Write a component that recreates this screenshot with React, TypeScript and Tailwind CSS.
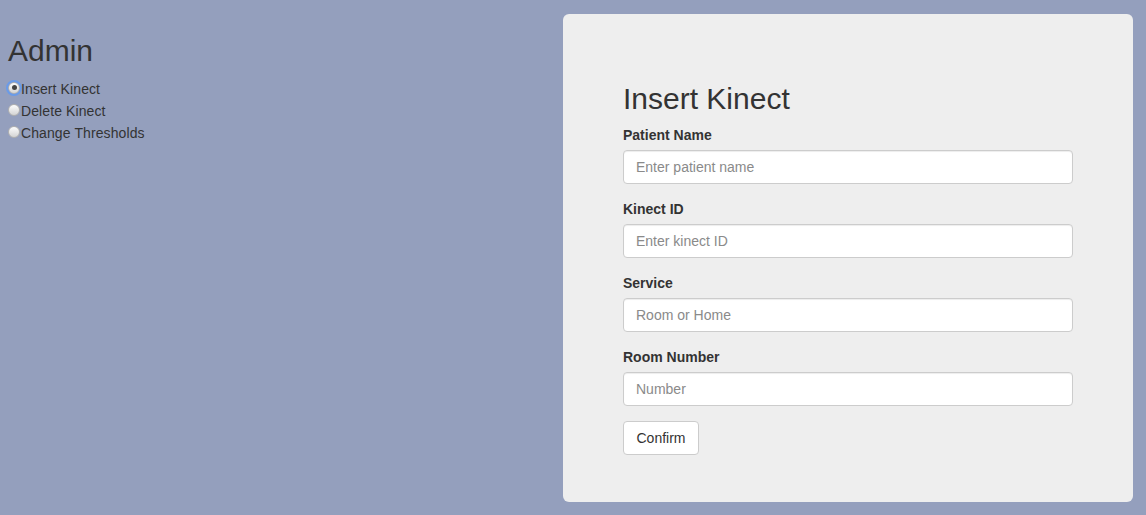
const fields = [
  { label: 'Patient Name', placeholder: 'Enter patient name' },
  { label: 'Kinect ID', placeholder: 'Enter kinect ID' },
  { label: 'Service', placeholder: 'Room or Home' },
  { label: 'Room Number', placeholder: 'Number' },
];

const options = ['Insert Kinect', 'Delete Kinect', 'Change Thresholds'];

const Radio = ({ checked }: { checked: boolean }) => (
  <span
    className={
      'mt-[-3px] flex h-[12px] w-[12px] shrink-0 items-center justify-center rounded-full border border-[#b0b0b0] bg-gradient-to-b from-[#fdfdfd] to-[#d4d4d4] ' +
      (checked ? 'outline outline-2 outline-offset-0 outline-[#6a9be8]' : '')
    }
  >
    {checked && <span className="h-[5px] w-[5px] rounded-full bg-[#444]" />}
  </span>
);

export default function App() {
  return (
    <div
      className="flex min-h-[515px] w-full bg-[#949fbd] text-[#333]"
      style={{ fontFamily: '"Liberation Sans", Arial, sans-serif' }}
    >
      <div className="flex-1 px-2">
        <h2 className="mt-[34px] mb-[11px] text-[30px] leading-[33px] font-normal">Admin</h2>
        <div className="flex flex-col">
          {options.map((o, i) => (
            <label key={o} className="flex h-[22px] items-center gap-[1px] text-[14px] tracking-[0.1px]">
              <Radio checked={i === 0} />
              <span>{o}</span>
            </label>
          ))}
        </div>
      </div>

      <div className="mt-[14px] mr-[13px] mb-[13px] w-[570px] rounded-[6px] bg-[#eeeeee] px-[60px] pt-[68px] pb-[47px]">
        <h2 className="mb-[10px] text-[30px] leading-[33px] font-normal">Insert Kinect</h2>
        {fields.map((f) => (
          <div key={f.label} className="mb-[15px]">
            <label className="mb-[5px] block text-[14px] leading-[20px] font-bold">{f.label}</label>
            <input
              type="text"
              placeholder={f.placeholder}
              className="block h-[34px] w-full rounded-[4px] border border-[#cccccc] bg-white px-3 text-[14px] shadow-[inset_0_1px_1px_rgba(0,0,0,0.075)] outline-none placeholder:text-[#8a8a8a]"
            />
          </div>
        ))}
        <button className="h-[34px] w-[76px] rounded-[4px] border border-[#cccccc] bg-white text-[14px] text-[#333]">
          Confirm
        </button>
      </div>
    </div>
  );
}
